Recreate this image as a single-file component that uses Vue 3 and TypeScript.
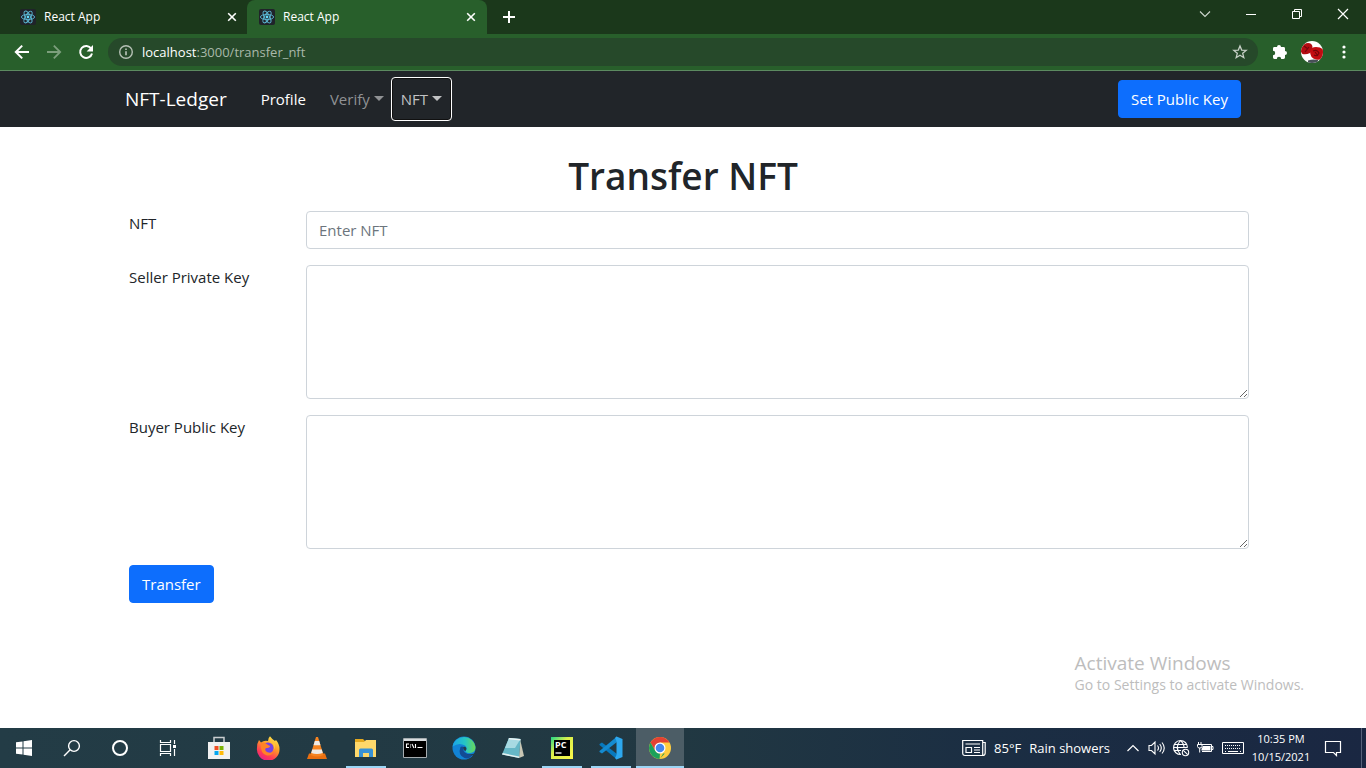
<script setup lang="ts">
import { ref } from 'vue'

const tabs = [
  { id: 1, title: 'React App', active: false },
  { id: 2, title: 'React App', active: true },
]

const nft = ref('')
const sellerKey = ref('')
const buyerKey = ref('')
</script>

<template>
  <div class="screen">
    <header class="browser">
      <div class="tabstrip">
        <div v-for="tab in tabs" :key="tab.id" class="tab" :class="{ active: tab.active }">
          <svg class="favicon" viewBox="0 0 16 16" width="16" height="16" aria-hidden="true">
            <rect width="16" height="16" rx="2" fill="#20232a" />
            <g fill="none" stroke="#5cb9d6" stroke-width="0.9">
              <ellipse cx="8" cy="8" rx="6.6" ry="2.6" />
              <ellipse cx="8" cy="8" rx="6.6" ry="2.6" transform="rotate(60 8 8)" />
              <ellipse cx="8" cy="8" rx="6.6" ry="2.6" transform="rotate(120 8 8)" />
            </g>
            <circle cx="8" cy="8" r="1.4" fill="#61dafb" />
          </svg>
          <span class="tab-title">{{ tab.title }}</span>
          <button class="icon-btn tab-close" type="button" aria-label="Close tab">
            <svg viewBox="0 0 16 16" width="16" height="16"><path d="M4.2 4.2l7.6 7.6M11.8 4.2l-7.6 7.6" stroke="#fff" stroke-width="1.6" /></svg>
          </button>
        </div>
        <button class="icon-btn new-tab" type="button" aria-label="New tab">
          <svg viewBox="0 0 16 16" width="16" height="16"><path d="M8 2v12M2 8h12" stroke="#fff" stroke-width="2" /></svg>
        </button>
        <div class="window-controls">
          <button class="icon-btn" type="button" aria-label="Search tabs">
            <svg viewBox="0 0 12 12" width="12" height="12"><path d="M1 3.5l5 5 5-5" fill="none" stroke="#cfd8cf" stroke-width="1.1" /></svg>
          </button>
          <button class="icon-btn" type="button" aria-label="Minimize">
            <svg viewBox="0 0 12 12" width="12" height="12"><path d="M1 6.5h10" stroke="#fff" /></svg>
          </button>
          <button class="icon-btn" type="button" aria-label="Restore">
            <svg viewBox="0 0 12 12" width="12" height="12" fill="none" stroke="#fff"><path d="M1.5 3.5h7v7h-7zM3.5 3.5v-2h7v7h-2" /></svg>
          </button>
          <button class="icon-btn" type="button" aria-label="Close">
            <svg viewBox="0 0 12 12" width="12" height="12"><path d="M1 1l10 10M11 1L1 11" stroke="#fff" stroke-width="1.2" /></svg>
          </button>
        </div>
      </div>
      <div class="toolbar">
        <button class="icon-btn nav-btn" type="button" aria-label="Back">
          <svg viewBox="0 0 16 16" width="16" height="16"><path d="M15 8H2M8.2 1.6L1.8 8l6.4 6.4" fill="none" stroke="#fff" stroke-width="2" /></svg>
        </button>
        <button class="icon-btn nav-btn" type="button" aria-label="Forward" disabled>
          <svg viewBox="0 0 16 16" width="16" height="16"><path d="M1 8h13M7.8 1.6L14.2 8l-6.4 6.4" fill="none" stroke="#7c9e7c" stroke-width="1.8" /></svg>
        </button>
        <button class="icon-btn nav-btn" type="button" aria-label="Reload">
          <svg viewBox="0 0 16 16" width="16" height="16"><path d="M13.2 4.6A6 6 0 1 0 14 9.4" fill="none" stroke="#fff" stroke-width="2" /><path d="M15 1v6.4H8.6z" fill="#fff" /></svg>
        </button>
        <div class="omnibox">
          <svg viewBox="0 0 16 16" width="16" height="16" aria-hidden="true"><circle cx="8" cy="8" r="6.3" fill="none" stroke="#b5c0b5" stroke-width="1.4" /><path d="M8 7.2v4M8 4.4v1.5" stroke="#c5cec5" stroke-width="1.5" /></svg>
          <div class="address" role="textbox" aria-label="Address" contenteditable="true" spellcheck="false"><span class="host">localhost</span>:3000/transfer_nft</div>
          <button class="icon-btn" type="button" aria-label="Bookmark this page">
            <svg viewBox="0 0 16 16" width="16" height="16"><path d="M8 1.9l1.7 4.2 4.5.3-3.5 2.9 1.1 4.4L8 11.3l-3.8 2.4 1.1-4.4L1.8 6.4l4.5-.3z" fill="none" stroke="#c7d0c7" stroke-width="1.3" /></svg>
          </button>
        </div>
        <button class="icon-btn ext" type="button" aria-label="Extensions">
          <svg viewBox="0 0 16 16" width="16" height="16"><path d="M1 4.4Q1 3 2.4 3H5a2 2 0 1 1 4 0h2.500Q13 3 13 4.400V7a2 2 0 1 1 0 4v2.600Q13 15 11.500 15H9.200a2.200 2.200 0 0 0-4.400 0H2.400Q1 15 1 13.600v-2.400a2.200 2.200 0 0 0 0-4.400z" fill="#fff" /></svg>
        </button>
        <button class="icon-btn avatar" type="button" aria-label="Profile">
          <svg viewBox="0 0 22 22" width="22" height="22">
            <defs><clipPath id="avatar-round"><circle cx="11" cy="11" r="11" /></clipPath></defs>
            <g clip-path="url(#avatar-round)">
              <path d="M0 0h22v22H0z" fill="#fff" />
              <path d="M7 19.500q5-1.500 10-.5v4H7z" fill="#485158" />
              <path d="M0 7Q3 2 7 2q4 0 4.500 4 0 4-2.500 6-4 2-7.500 1Q-.5 12 0 7z" fill="#b30d12" />
              <path d="M9 10q1-4 6-4 5 0 8 3v8q-4 2.500-8 1.500-6-1-6-8.500z" fill="#c30c12" />
              <path d="M3 5l4 3M4 11l4-5M12 10q4-2 6 2-2 4-5 2M14 11l3 4" fill="none" stroke="#74060b" stroke-width="1.2" />
            </g>
          </svg>
        </button>
        <button class="icon-btn menu" type="button" aria-label="Browser menu">
          <svg viewBox="0 0 16 16" width="16" height="16" fill="#fff"><circle cx="8" cy="3" r="1.6" /><circle cx="8" cy="8" r="1.6" /><circle cx="8" cy="13" r="1.6" /></svg>
        </button>
      </div>
    </header>

    <nav class="navbar">
      <div class="container">
        <a class="brand" href="#">NFT-Ledger</a>
        <div class="nav-links">
          <a class="nav-link current" href="#profile">Profile</a>
          <button class="nav-link dropdown" type="button" aria-haspopup="true">Verify</button>
          <button class="nav-link dropdown focused" type="button" aria-haspopup="true">NFT</button>
        </div>
        <button class="btn" type="button">Set Public Key</button>
      </div>
    </nav>

    <main class="page">
      <h1>Transfer NFT</h1>
      <form class="form" @submit.prevent>
        <div class="field">
          <label for="nft">NFT</label>
          <input id="nft" v-model="nft" class="control" type="text" placeholder="Enter NFT" />
        </div>
        <div class="field">
          <label for="seller">Seller Private Key</label>
          <textarea id="seller" v-model="sellerKey" class="control" rows="5"></textarea>
        </div>
        <div class="field">
          <label for="buyer">Buyer Public Key</label>
          <textarea id="buyer" v-model="buyerKey" class="control" rows="5"></textarea>
        </div>
        <button class="btn" type="submit">Transfer</button>
      </form>
      <div class="watermark">
        <p class="watermark-title">Activate Windows</p>
        <p class="watermark-text">Go to Settings to activate Windows.</p>
      </div>
    </main>

    <footer class="taskbar">
      <div class="system">
        <button class="task" type="button" aria-label="Start">
          <svg viewBox="0 0 16 16" width="16" height="16" fill="#fff"><path d="M0 2.300L6.500 1.400V7.500H0zM7.500 1.200L16 0v7.500H7.500zM0 8.500h6.500v6.100L0 13.700zM7.500 8.500H16V16l-8.500-1.200z" /></svg>
        </button>
        <button class="task" type="button" aria-label="Search">
          <svg viewBox="0 0 18 18" width="18" height="18" fill="none" stroke="#fff" stroke-width="1.4"><circle cx="11" cy="7" r="5.400" /><path d="M7.200 10.800L1 17" /></svg>
        </button>
        <button class="task" type="button" aria-label="Cortana">
          <svg viewBox="0 0 18 18" width="18" height="18" fill="none"><circle cx="9" cy="9" r="7" stroke="#fff" stroke-width="2" /></svg>
        </button>
        <button class="task" type="button" aria-label="Task view">
          <svg viewBox="0 0 18 18" width="18" height="18" fill="none" stroke="#fff" stroke-width="1.200"><path d="M1.500 1v2.500h10V1M1.500 17v-2.500h10V17M1.500 5.500h10v7h-10zM15.500 1v4M15.500 10v7" /><path d="M14 6h3v3h-3z" fill="#fff" stroke="none" /></svg>
        </button>
      </div>
      <div class="apps">
        <button class="task" type="button" aria-label="Microsoft Store">
          <svg viewBox="0 0 24 26" width="24" height="26"><path d="M7 8V2.500h10V8" fill="none" stroke="#c9cdd0" stroke-width="1.500" /><path d="M1 7h22v17H1z" fill="#f1f1f1" /><path d="M7.500 11h4v4h-4z" fill="#f04e23" /><path d="M12.500 11h4v4h-4z" fill="#7cb305" /><path d="M7.500 16h4v4h-4z" fill="#05a6f0" /><path d="M12.500 16h4v4h-4z" fill="#ffba08" /></svg>
        </button>
        <button class="task" type="button" aria-label="Firefox">
          <svg viewBox="0 0 24 24" width="24" height="24">
            <defs><linearGradient id="ff" x1="0.8" y1="0" x2="0.25" y2="1"><stop offset="0" stop-color="#fff04f" /><stop offset="0.4" stop-color="#ff9a27" /><stop offset="0.75" stop-color="#ff3b55" /><stop offset="1" stop-color="#e4208c" /></linearGradient></defs>
            <path d="M3 4l2 2.500Q8 4 12 5q0-3 2-4.700 2 3 5 4.700l1-1q3.500 4 3.500 9A11.300 11.300 0 1 1 1 12Q1 7 3 4z" fill="url(#ff)" />
            <circle cx="12" cy="12" r="5.600" fill="#7542e5" />
            <path d="M5 7q4-1 7 2l2 1q0 2-4 2-2 2 1 4 4 2 7-1-2 5-7 4.500Q4 18 5 7z" fill="#ff8227" /><path d="M13 6q3 0 4.500 3 1 3 0 5 4-5-1-9z" fill="#ffc43b" />
          </svg>
        </button>
        <button class="task" type="button" aria-label="VLC media player">
          <svg viewBox="0 0 24 24" width="24" height="24"><path d="M4 17.500h16l2 5.500H2z" fill="#e96f10" /><path d="M11 1h2L18.500 19q-6.500 3-13 0z" fill="#f58320" /><path d="M9.800 5h4.400l1.300 4.300h-7zM7.200 13.500h9.600l1 3.500q-5.800 2-11.600 0z" fill="#eeeae5" /></svg>
        </button>
        <button class="task open" type="button" aria-label="File Explorer">
          <svg viewBox="0 0 24 24" width="24" height="24"><path d="M1 3h8l2 2h11v16H1z" fill="#e5a91f" /><path d="M1 6h9l2-2h10v17H1z" fill="#ffd86b" /><path d="M5 21v-7q0-1.500 1.500-1.500h11q1.500 0 1.500 1.500v7h-4v-4H9v4z" fill="#3991d5" /></svg>
        </button>
        <button class="task" type="button" aria-label="Command Prompt">
          <svg viewBox="0 0 24 20" width="24" height="20"><path d="M.5.500h23v19H.5z" fill="#000" stroke="#a6adb1" /><path d="M1 1h22v2H1z" fill="#d9dddf" /><path d="M6 6H3.500v3.500H6M7.500 6.500v1M7.500 8.500v1M9 6l2 4M12.500 6v4M14.500 9.500h5" fill="none" stroke="#fff" stroke-width="1.100" /></svg>
        </button>
        <button class="task" type="button" aria-label="Microsoft Edge">
          <svg viewBox="0 0 24 24" width="24" height="24">
            <defs><linearGradient id="edge-top" x1="0" x2="1"><stop offset="0" stop-color="#1ba4e8" /><stop offset="0.55" stop-color="#26c7c3" /><stop offset="1" stop-color="#6bd958" /></linearGradient></defs>
            <circle cx="12" cy="12" r="11.500" fill="#1283d5" />
            <path d="M.6 10.500A11.600 11.600 0 0 1 23.500 11q.3 5-5 6-4.500.3-5-2 2.500-3-.5-5.500Q7 6 .6 10.500z" fill="url(#edge-top)" />
            <path d="M8.500 11q-3 8 4 11 5 2 9.200-4.500-5 2-8-.5-3.300-2-2-6-1.800-1-3.200 0z" fill="#134b94" />
            <path d="M11.300 11q2-1 3 1 .4 1.600-.8 3-2.500-1-2.200-4z" fill="#233d48" /><path d="M14 17.500q4 2 8.500 0l2 1-1.500 1-1.500-.5q-4 1-7.500-1.500z" fill="#233b47" />
          </svg>
        </button>
        <button class="task" type="button" aria-label="Notepad">
          <svg viewBox="0 0 24 24" width="24" height="24"><path d="M19 3l4 17-5 2z" fill="#c9c6b4" /><path d="M8 2l11.500 1L18 22 1 18.500z" fill="#66b7c6" /><path d="M8 2l11.500 1L14 12 4 12z" fill="#a8dae2" /><path d="M8 2l11.500 1v1.500L7.500 3.300z" fill="#edf3f4" /><path d="M1 18.500L18 22l.1-1.500L1.700 17z" fill="#e4efef" /></svg>
        </button>
        <button class="task open" type="button" aria-label="PyCharm">
          <svg viewBox="0 0 24 24" width="24" height="24">
            <defs><linearGradient id="pc" x1="0" y1="0" x2="1" y2="1"><stop offset="0" stop-color="#21d789" /><stop offset="0.4" stop-color="#d9ef4b" /><stop offset="1" stop-color="#fcf84a" /></linearGradient></defs>
            <path d="M1 1h22v22H1z" fill="url(#pc)" /><path d="M4 4h16v16H4z" fill="#000" /><text x="5" y="12" fill="#fff" font-family="Open Sans, sans-serif" font-size="9" font-weight="700">PC</text><path d="M5.500 17h6" stroke="#fff" stroke-width="1.300" />
          </svg>
        </button>
        <button class="task open" type="button" aria-label="Visual Studio Code">
          <svg viewBox="0 0 24 24" width="24" height="24"><path d="M.5 8L3 6.500 18 18v5.500L.5 9z" fill="#0879bd" /><path d="M.5 16L3 17.500 18 6V.500L.5 15z" fill="#148bd0" /><path d="M17.500.500L23.500 3v18l-6 2.500L16 22l1.500-3V5L16 2z" fill="#2da8ee" /></svg>
        </button>
        <button class="task open current-app" type="button" aria-label="Google Chrome">
          <svg viewBox="0 0 24 24" width="24" height="24"><circle cx="12" cy="12" r="11" fill="#ffcd40" /><path d="M2.500 6.500A11 11 0 0 1 21.500 6.500H12L7.200 14.700z" fill="#e34133" /><path d="M2.500 6.500L7.200 14.750A5.500 5.500 0 0 0 12 17.500h4.800L11.600 23A11 11 0 0 1 2.500 6.500z" fill="#1ba15b" /><path d="M12 17.500l4.760-2.750L12 23h-.4z" fill="#ffcd40" /><circle cx="12" cy="12" r="5.500" fill="#fff" /><circle cx="12" cy="12" r="4.300" fill="#4586ee" /></svg>
        </button>
      </div>
      <div class="tray">
        <button class="weather" type="button">
          <svg viewBox="0 0 24 18" width="24" height="18" fill="none" stroke="#fff" stroke-width="1.200"><path d="M.7 1.500h20v15H3Q.7 16.500.7 14zM20.700 3.500h2.500V14q0 2.500-2.500 2.500M3.500 5h14.500M12 8.500h6M12 11h6M12 13.500h6M4 8.500h5.500v5H4z" /></svg>
          <span>85°F</span><span>Rain showers</span>
        </button>
        <button class="icon-btn tray-btn" type="button" aria-label="Show hidden icons">
          <svg viewBox="0 0 14 14" width="14" height="14"><path d="M1.500 10L7 4.500 12.500 10" fill="none" stroke="#fff" stroke-width="1.200" /></svg>
        </button>
        <button class="icon-btn tray-btn" type="button" aria-label="Volume">
          <svg viewBox="0 0 18 16" width="18" height="16" fill="none" stroke="#fff" stroke-width="1.100"><path d="M1 5.500h2.500L7 2v12l-3.500-3.500H1zM9.500 5.500q2 2.500 0 5M11.700 4q3.200 4 0 8M14 2.500q4.500 5.500 0 11" /></svg>
        </button>
        <button class="icon-btn tray-btn" type="button" aria-label="Network">
          <svg viewBox="0 0 18 18" width="18" height="18" fill="none" stroke="#fff" stroke-width="1.100"><path d="M9 15.500A7 7 0 1 1 15.500 8.500M8.500 1.500q-6.500 7 0 14M8.500 1.500q3.500 3 3.500 7M2.500 5.500h12M2.500 11.500H9M1.500 8.500h14" /><circle cx="13.500" cy="13.500" r="3.200" /><path d="M11.300 11.300l4.400 4.400" /></svg>
        </button>
        <button class="icon-btn tray-btn" type="button" aria-label="Battery">
          <svg viewBox="0 0 18 16" width="18" height="16" fill="none" stroke="#fff"><path d="M6 4.500h9.500v7H6M15.500 6.500h1.500v3h-1.500M2.500 2v2.500M5 2v2.500M1.500 4.500H6v2q0 1.500-2.300 1.500-2.200 0-2.200-1.500zM3.700 8v4.500" /><path d="M7 6h7.500v4.500H5.500V9z" fill="#fff" stroke="none" /></svg>
        </button>
        <button class="icon-btn keyboard" type="button" aria-label="Touch keyboard">
          <svg viewBox="0 0 24 14" width="24" height="14" fill="none" stroke="#fff"><path d="M1.500 1.500h21v11h-21z" /><path d="M4 4.500h16M4 7.500h16" stroke-dasharray="1 1" /><path d="M4 10.500h1M7 10.500h10M19 10.500h1" /></svg>
        </button>
        <button class="clock" type="button"><span>10:35 PM</span><span>10/15/2021</span></button>
        <button class="icon-btn notify" type="button" aria-label="Notifications">
          <svg viewBox="0 0 18 18" width="18" height="18" fill="none" stroke="#fff" stroke-width="1.200"><path d="M1.500 2.500h15v11h-4v3l-3-3h-8z" /></svg>
        </button>
        <div class="desktop-edge"></div>
      </div>
    </footer>
  </div>
</template>

<style>
body {
  margin: 0;
}
</style>

<style scoped>
.screen {
  display: flex;
  flex-direction: column;
  min-height: 100vh;
  background: #fff;
  color: #212529;
  font-family: 'Open Sans', 'Noto Sans', sans-serif;
  font-size: 15px;
  line-height: 24px;
}

button {
  font-family: inherit;
  margin: 0;
}

svg {
  display: block;
  flex: none;
}

.icon-btn {
  display: flex;
  align-items: center;
  justify-content: center;
  padding: 0;
  border: 0;
  background: none;
}

.browser {
  border-bottom: 1px solid #5c8a60;
  background: #285f2b;
  color: #fff;
}

.tabstrip {
  display: flex;
  height: 34px;
  background: #1b381b;
}

.tab {
  display: flex;
  align-items: center;
  box-sizing: border-box;
  width: 240px;
  padding: 0 8px 0 12px;
  font-size: 12px;
}

.tab:first-child {
  width: 247px;
  padding: 0 7px 0 20px;
}

.tab.active {
  background: #285f2b;
  border-radius: 8px 8px 0 0;
}

.tab-title {
  flex: 1;
  margin-left: 8px;
}

.new-tab {
  width: 44px;
}

.window-controls {
  display: flex;
  margin-left: auto;
  height: 28px;
}

.window-controls .icon-btn {
  width: 46px;
}

.toolbar {
  display: flex;
  align-items: center;
  height: 36px;
  padding: 0 12px 0 6px;
}

.nav-btn {
  width: 32px;
  height: 28px;
}

.omnibox {
  display: flex;
  flex: 1;
  align-items: center;
  gap: 8px;
  height: 28px;
  margin-left: 6px;
  padding: 0 10px;
  border-radius: 14px;
  background: #26492a;
  color: #a9b8a9;
  font-size: 13px;
}

.address {
  flex: 1;
}

.host {
  color: #fff;
}

.ext {
  width: 32px;
  margin-left: 6px;
}

.avatar {
  width: 32px;
}

.menu {
  width: 32px;
  margin-right: -6px;
}

.navbar {
  background: #212529;
}

.container {
  display: flex;
  align-items: center;
  box-sizing: border-box;
  max-width: 1140px;
  height: 56px;
  margin: 0 auto;
  padding: 0 12px;
}

.brand {
  color: #fff;
  font-size: 19px;
  text-decoration: none;
}

.nav-links {
  display: flex;
  flex: 1;
  align-items: center;
  margin-left: 26px;
}

.nav-link {
  padding: 8px;
  border: 0;
  background: none;
  color: #909294;
  font-size: 15px;
  line-height: 24px;
  text-decoration: none;
}

.current {
  margin-right: 8px;
  color: #fff;
}

.dropdown::after {
  display: inline-block;
  margin-left: 4px;
  border-top: 5px solid;
  border-right: 5px solid transparent;
  border-left: 5px solid transparent;
  vertical-align: 4px;
  content: '';
}

.focused {
  border: 1px solid #101010;
  border-radius: 3px;
  outline: 1px solid #fff;
  color: #c1c2c3;
}

.btn {
  padding: 6px 12px;
  border: 1px solid #0d6efd;
  border-radius: 4px;
  background: #0d6efd;
  color: #fff;
  font-size: 15px;
  line-height: 24px;
}

.page {
  position: relative;
  flex: 1;
  padding: 25px 12px 0;
}

h1 {
  margin: 0 0 11px;
  font-size: 37px;
  font-weight: 600;
  line-height: 48px;
  text-align: center;
}

.form {
  max-width: 1120px;
  margin: 0 auto;
  padding-left: 12px;
}

.field {
  display: grid;
  grid-template-columns: 165px 1fr;
  gap: 12px;
  margin-bottom: 16px;
}

.control {
  box-sizing: border-box;
  display: block;
  width: 100%;
  margin: 0;
  padding: 6px 12px;
  border: 1px solid #ced4da;
  border-radius: 4px;
  background: #fff;
  color: #212529;
  font-family: inherit;
  font-size: 15px;
  line-height: 24px;
}

.control::placeholder {
  color: #6c757d;
}

textarea.control {
  resize: vertical;
}

.watermark {
  position: absolute;
  right: 62px;
  bottom: 33px;
  color: #bdbdbd;
  pointer-events: none;
}

.watermark p {
  margin: 0;
}

.watermark-title {
  font-size: 19px;
}

.watermark-text {
  font-size: 14px;
  line-height: 20px;
}

.taskbar {
  display: flex;
  height: 40px;
  background: linear-gradient(90deg, #233c46 0%, #213842 50%, #1b2e43 72%, #1a2742 100%);
  color: #fff;
}

.system {
  display: flex;
  margin-right: 3px;
}

.apps {
  display: flex;
  gap: 1px;
}

.task {
  display: flex;
  align-items: center;
  justify-content: center;
  position: relative;
  width: 48px;
  padding: 0;
  border: 0;
  background: none;
}

.open::after {
  position: absolute;
  right: 4px;
  bottom: 0;
  left: 4px;
  height: 2px;
  background: #9bd5f5;
  content: '';
}

.current-app {
  background: #4c5d66;
}

.current-app::after {
  right: 0;
  left: 0;
}

.tray {
  display: flex;
  margin-left: auto;
}

.weather {
  display: flex;
  align-items: center;
  gap: 8px;
  padding: 0 11px 0 0;
  border: 0;
  background: none;
  color: #fff;
  font-size: 13px;
}

.tray-btn {
  width: 24px;
}

.keyboard {
  width: 32px;
}

.clock {
  display: flex;
  flex-direction: column;
  align-items: center;
  justify-content: center;
  width: 64px;
  padding: 0;
  border: 0;
  background: none;
  color: #fff;
  font-size: 11px;
  line-height: 18px;
}

.notify {
  width: 40px;
}

.desktop-edge {
  width: 4px;
  margin-left: 8px;
  border-left: 1px solid #56627a;
}
</style>
